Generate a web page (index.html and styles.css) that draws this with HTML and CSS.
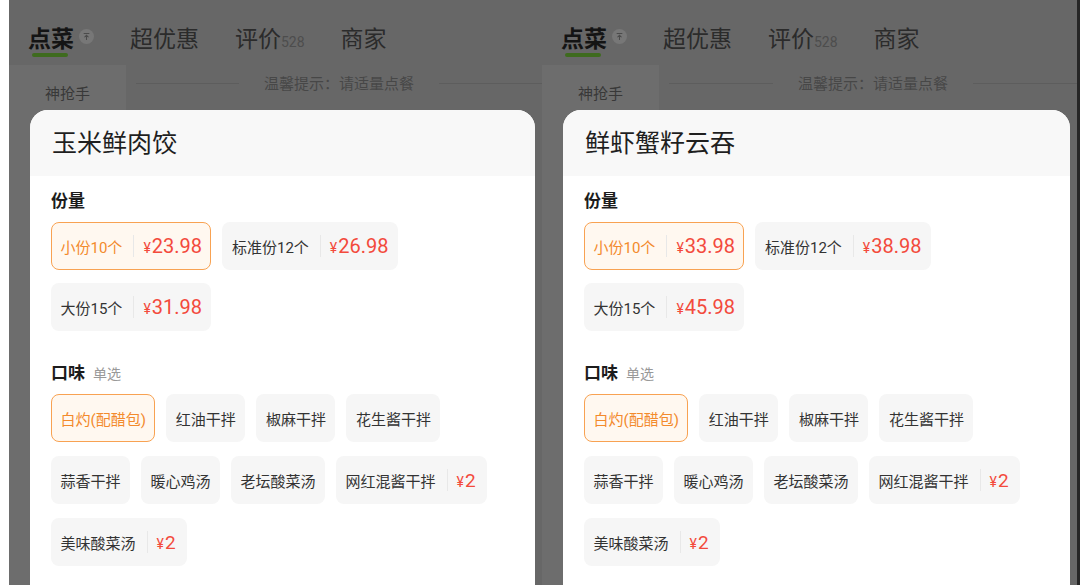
FILE: index.html
```html
<!DOCTYPE html>
<html>
<head>
  <title>点菜 - 规格选择</title>
  <link rel="stylesheet" href="styles.css">
</head>
<body>
  <div class="screens">
    <section class="screen">
      <nav class="tabs">
        <div class="tab active">
          <div class="tab-row">点菜
            <svg class="tab-badge" viewBox="0 0 16 16"><circle cx="8" cy="8" r="8" fill="#777"/><path d="M5 4.8h6M8 6.6v5M5.8 8.8L8 6.6l2.2 2.2" fill="none" stroke="#4b4b4b" stroke-width="1.1"/></svg>
          </div>
          <div class="tab-bar"></div>
        </div>
        <div class="tab"><div class="tab-row">超优惠</div></div>
        <div class="tab"><div class="tab-row">评价<span class="tab-count">528</span></div></div>
        <div class="tab"><div class="tab-row">商家</div></div>
      </nav>
      <div class="menu">
        <aside class="menu-side"><div class="side-item">神抢手</div></aside>
        <div class="menu-main"><div class="notice"><span>温馨提示：请适量点餐</span></div></div>
      </div>

      <div class="sheet">
        <div class="sheet-head">玉米鲜肉饺</div>
        <div class="sheet-body">
          <div class="group">
            <div class="group-title">份量</div>
            <div class="chips">
              <div class="chip on">小份10个<i class="sep"></i><span class="price"><small>¥</small>23.98</span></div>
              <div class="chip">标准份12个<i class="sep"></i><span class="price"><small>¥</small>26.98</span></div>
              <div class="chip">大份15个<i class="sep"></i><span class="price"><small>¥</small>31.98</span></div>
            </div>
          </div>
          <div class="group">
            <div class="group-title">口味<small>单选</small></div>
            <div class="chips flavors">
              <div class="chip on">白灼(配醋包)</div>
              <div class="chip">红油干拌</div>
              <div class="chip">椒麻干拌</div>
              <div class="chip">花生酱干拌</div>
              <div class="chip">蒜香干拌</div>
              <div class="chip">暖心鸡汤</div>
              <div class="chip">老坛酸菜汤</div>
              <div class="chip">网红混酱干拌<i class="sep"></i><span class="price extra"><small>¥</small>2</span></div>
              <div class="chip">美味酸菜汤<i class="sep"></i><span class="price extra"><small>¥</small>2</span></div>
            </div>
          </div>
        </div>
      </div>
    </section>

    <section class="screen">
      <nav class="tabs">
        <div class="tab active">
          <div class="tab-row">点菜
            <svg class="tab-badge" viewBox="0 0 16 16"><circle cx="8" cy="8" r="8" fill="#777"/><path d="M5 4.8h6M8 6.6v5M5.8 8.8L8 6.6l2.2 2.2" fill="none" stroke="#4b4b4b" stroke-width="1.1"/></svg>
          </div>
          <div class="tab-bar"></div>
        </div>
        <div class="tab"><div class="tab-row">超优惠</div></div>
        <div class="tab"><div class="tab-row">评价<span class="tab-count">528</span></div></div>
        <div class="tab"><div class="tab-row">商家</div></div>
      </nav>
      <div class="menu">
        <aside class="menu-side"><div class="side-item">神抢手</div></aside>
        <div class="menu-main"><div class="notice"><span>温馨提示：请适量点餐</span></div></div>
      </div>

      <div class="sheet">
        <div class="sheet-head">鲜虾蟹籽云吞</div>
        <div class="sheet-body">
          <div class="group">
            <div class="group-title">份量</div>
            <div class="chips">
              <div class="chip on">小份10个<i class="sep"></i><span class="price"><small>¥</small>33.98</span></div>
              <div class="chip">标准份12个<i class="sep"></i><span class="price"><small>¥</small>38.98</span></div>
              <div class="chip">大份15个<i class="sep"></i><span class="price"><small>¥</small>45.98</span></div>
            </div>
          </div>
          <div class="group">
            <div class="group-title">口味<small>单选</small></div>
            <div class="chips flavors">
              <div class="chip on">白灼(配醋包)</div>
              <div class="chip">红油干拌</div>
              <div class="chip">椒麻干拌</div>
              <div class="chip">花生酱干拌</div>
              <div class="chip">蒜香干拌</div>
              <div class="chip">暖心鸡汤</div>
              <div class="chip">老坛酸菜汤</div>
              <div class="chip">网红混酱干拌<i class="sep"></i><span class="price extra"><small>¥</small>2</span></div>
              <div class="chip">美味酸菜汤<i class="sep"></i><span class="price extra"><small>¥</small>2</span></div>
            </div>
          </div>
        </div>
      </div>
    </section>
  </div>
</body>
</html>
```

FILE: styles.css
```css
body { margin: 0; background: #fff; font-family: "Noto Sans CJK SC", "Noto Sans", sans-serif; }

.screens {
  display: flex;
  height: 585px;
  padding-left: 9px;
}

.screen {
  position: relative;
  overflow: hidden;
  flex-shrink: 0;
  width: 533px;
  background: #676767;
}

.screen + .screen {
  width: 535px;
  border-right: 3px solid #262626;
}

/* tab bar, under the dim layer */
.tabs {
  display: flex;
  gap: 36px;
  height: 65px;
  box-sizing: border-box;
  padding: 23px 0 0 19px;
}

.tab {
  display: flex;
  flex-direction: column;
  align-items: flex-start;
}

.tab-row {
  display: flex;
  align-items: baseline;
  font-size: 23px;
  line-height: 28px;
  color: #2b2b2b;
}

.tab.active .tab-row {
  color: #141414;
  font-weight: 700;
}

.tab-badge {
  align-self: flex-start;
  width: 15px;
  height: 15px;
  margin: 6px 0 0 5px;
}

.tab-count {
  font-family: Roboto, sans-serif;
  font-size: 14px;
  color: #4d4d4d;
}

.tab-bar {
  width: 36px;
  height: 4px;
  margin: 2px 0 0 4px;
  border-radius: 2px;
  background: #3e6b1e;
}

.menu {
  display: flex;
  height: calc(100% - 65px);
}

.menu-side {
  width: 117px;
  background: #6d6d6d;
}

.side-item {
  padding-top: 18px;
  text-align: center;
  font-size: 15px;
  line-height: 20px;
  color: #383838;
}

.menu-main {
  flex: 1;
  padding: 8px 0 0 10px;
}

.notice {
  display: flex;
  align-items: center;
  font-size: 15px;
  line-height: 20px;
  color: #474747;
}

.notice::before,
.notice::after {
  content: "";
  flex: 1;
  height: 1px;
  background: #5d5d5d;
}

.notice span {
  margin: 0 25px;
}

/* bottom sheet */
.sheet {
  position: absolute;
  top: 110px;
  left: 21px;
  right: 7px;
  bottom: 0;
  overflow: hidden;
  border-radius: 18px 18px 0 0;
  background: #fff;
}

.sheet-head {
  display: flex;
  align-items: center;
  height: 66px;
  box-sizing: border-box;
  padding: 0 0 4px 22px;
  background: #f8f8f8;
  font-size: 25px;
  color: #1f1f1f;
}

.sheet-body {
  padding: 12px 21px 0;
}

.group + .group {
  margin-top: 29px;
}

.group-title {
  margin-bottom: 10px;
  font-size: 17px;
  line-height: 24px;
  font-weight: 700;
  color: #1c1c1c;
}

.group-title small {
  margin-left: 8px;
  font-size: 14px;
  font-weight: 400;
  color: #999;
}

.chips {
  display: flex;
  flex-wrap: wrap;
  gap: 13px 11px;
}

.chips.flavors {
  gap: 14px 11px;
  margin-top: -1px;
}

.chip {
  display: flex;
  align-items: center;
  height: 48px;
  box-sizing: border-box;
  padding: 0 8.5px;
  border: 1.5px solid transparent;
  border-radius: 8px;
  background: #f6f6f6;
  font-family: Roboto, "Noto Sans CJK SC", sans-serif;
  font-size: 15px;
  color: #333;
}

.chip.on {
  border-color: #f8a252;
  background: #fff8f0;
  color: #f38a2c;
}

.sep {
  width: 1px;
  height: 22px;
  margin: 0 9px 0 11px;
  background: #e8e8e8;
}

.price {
  font-family: Roboto, sans-serif;
  font-size: 20px;
  color: #f34a3c;
}

.price small {
  margin-right: 1px;
  font-size: 14px;
}

.price.extra {
  padding-right: 2px;
  font-size: 19px;
}
```
